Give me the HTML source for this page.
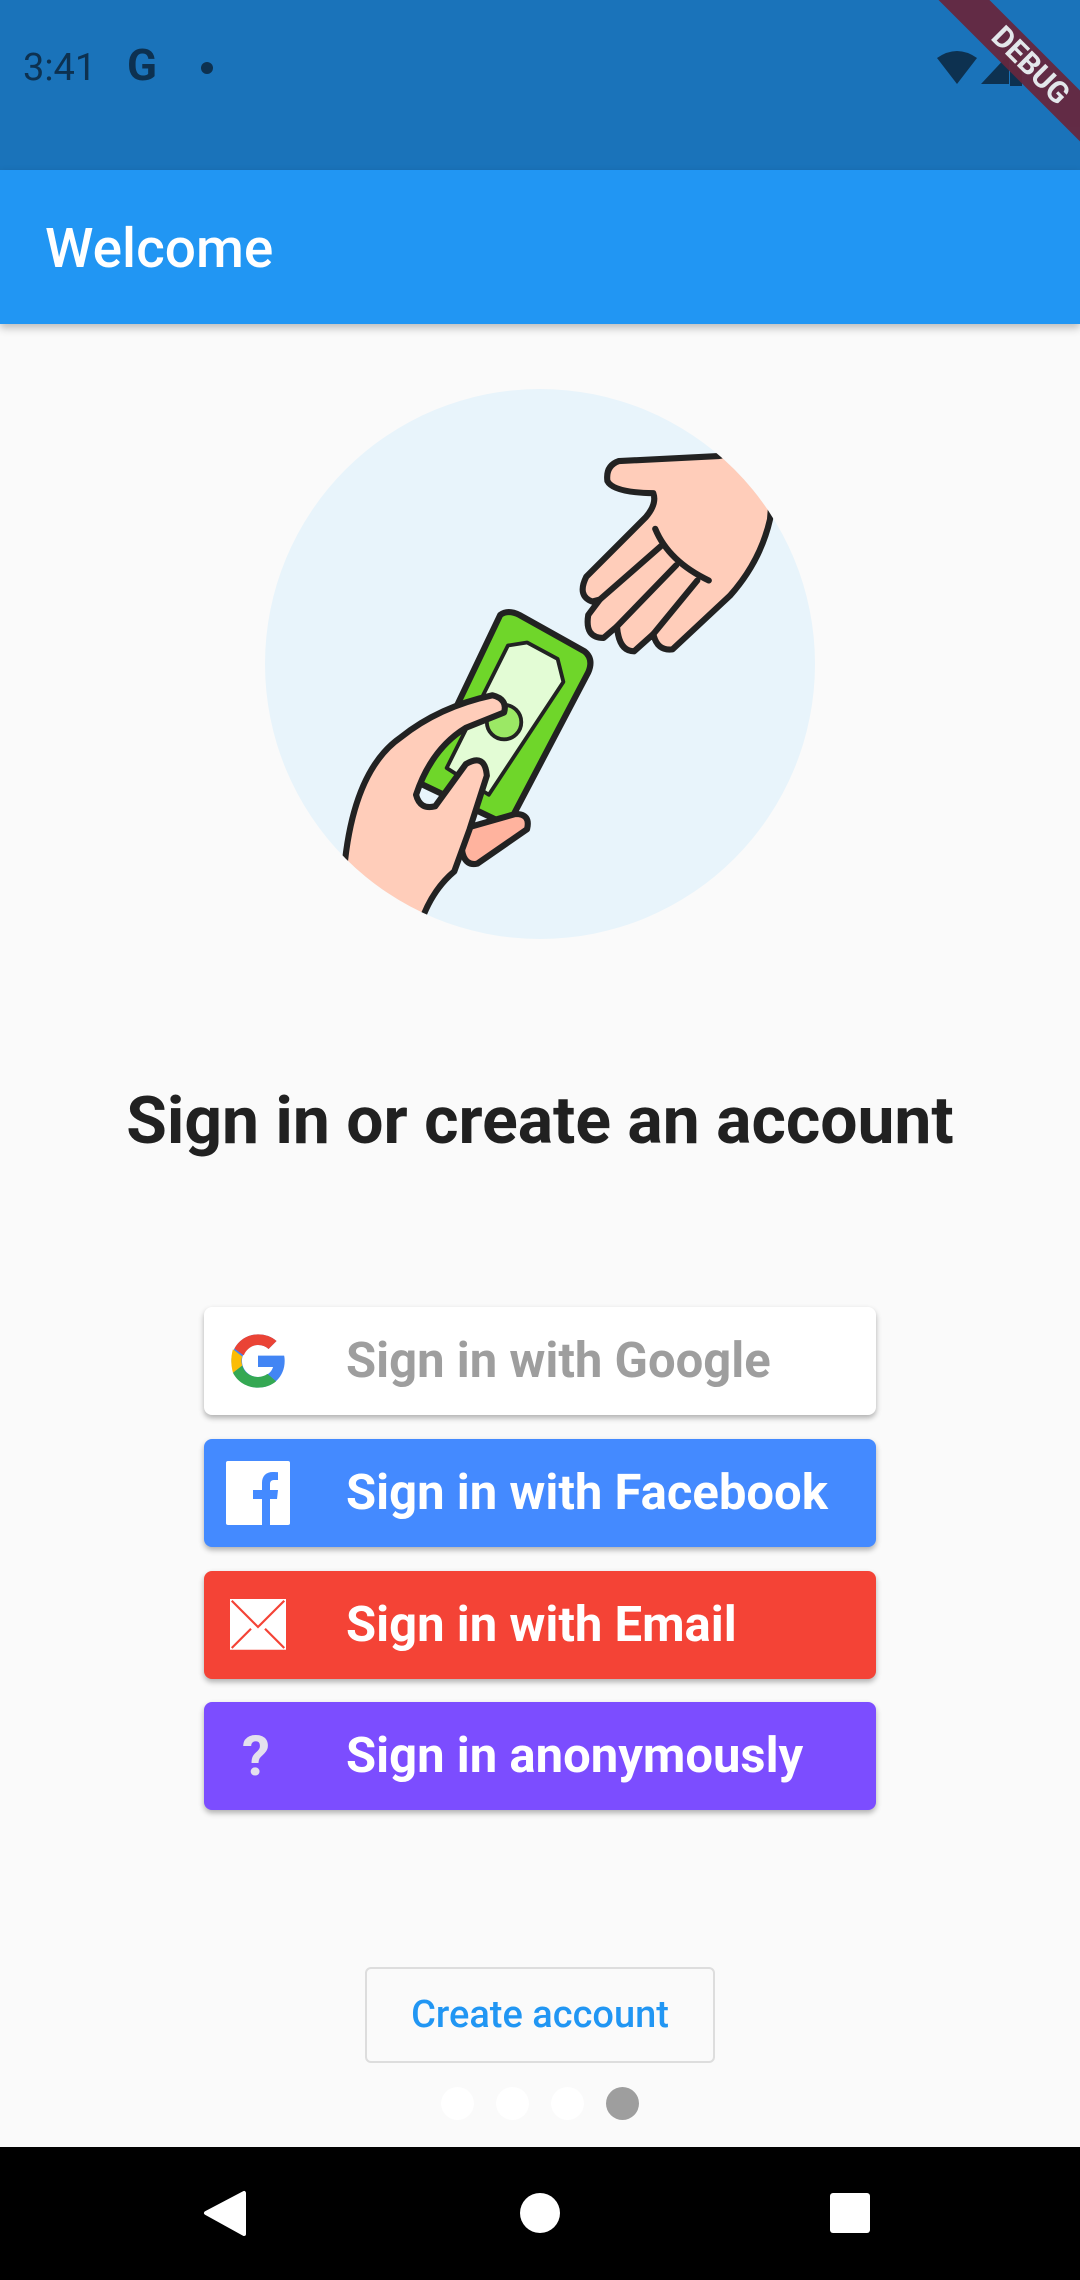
<!DOCTYPE html>
<html><head><meta charset="utf-8"><style>
html,body{margin:0;padding:0}
body{width:1080px;height:2280px;position:relative;overflow:hidden;background:#FAFAFA;font-family:"Roboto","Liberation Sans",sans-serif}
.abs{position:absolute}
.status{left:0;top:0;width:1080px;height:170px;background:#1A73BA}
.appbar{left:0;top:170px;width:1080px;height:154px;background:#2196F3;box-shadow:0 4px 8px rgba(0,0,0,.25)}
.btn{position:absolute;left:204px;width:672px;height:108px;border-radius:8px;box-shadow:0 3px 6px rgba(0,0,0,.3);font-weight:bold;font-size:49px;color:#fff}
.btn span{position:absolute;left:142px;top:0;line-height:108px;white-space:nowrap}
.ico{position:absolute;left:22px;top:22px;width:64px;height:64px}
.dot{position:absolute;top:2087px;width:33px;height:33px;border-radius:50%;background:#fff}
</style></head><body>
<div class="abs status"></div>
<div class="abs" style="left:23px;top:43px;font-size:38px;color:#0D3150;line-height:50px">3:41</div>
<div class="abs" style="left:127px;top:40px;font-size:44px;font-weight:bold;color:#0D3150;line-height:50px">G</div>
<div class="abs" style="left:201px;top:62px;width:12px;height:12px;border-radius:50%;background:#0D3150"></div>
<svg class="abs" style="left:935px;top:50px" width="90" height="40" viewBox="0 0 90 40">
<path d="M2 8 Q22 -6 42 8 L22 34 Z" fill="#0D3150"/>
<path d="M46 34 L74 4 L74 34 Z" fill="#0D3150"/>
<rect x="75" y="4" width="12" height="32" fill="#0D3150"/>
</svg>
<div class="abs" style="left:880px;top:48px;width:300px;height:36px;background:#66283F;transform:rotate(45deg);transform-origin:center;color:#eee;font-weight:bold;font-size:30px;line-height:36px;text-align:center;opacity:.95">DEBUG</div>
<div class="abs appbar"></div>
<div class="abs" style="left:45px;top:217px;font-size:55px;color:#fff;line-height:64px;font-weight:500">Welcome</div>

<svg class="abs" style="left:0;top:0" width="1080" height="1000" viewBox="0 0 1080 1000">
<defs><clipPath id="c"><circle cx="540" cy="664" r="275"/></clipPath></defs>
<circle cx="540" cy="664" r="275" fill="#E8F4FB"/>
<g clip-path="url(#c)">
<g transform="translate(240,370) scale(0.3827)" stroke="#222" stroke-width="16" stroke-linejoin="round" stroke-linecap="round">
<path d="M1250,225 L990,238 Q955,250 960,290 Q975,320 1080,322 Q1090,350 1060,385 L905,540 Q880,590 920,605 L940,600 L910,640 Q900,700 950,700 L985,670 Q990,735 1030,735 L1080,690 Q1090,735 1130,730 L1280,590 Q1360,500 1385,390 L1400,200 Z" fill="#FFCDBA"/>
<path d="M1085,415 Q1120,500 1225,550 M1100,460 L940,600 M1140,510 L985,670 M1195,550 L1080,690" fill="none"/>
<path d="M680,640 Q700,625 730,640 L900,735 Q925,755 910,790 L700,1190 L470,1080 Z" fill="#6FD62A"/>
<path d="M700,720 L750,712 L830,755 L845,815 L650,1110 L540,1040 Z" fill="#E3FCD5" stroke-width="10"/>
<circle cx="690" cy="920" r="45" fill="#9BE865" stroke-width="10"/>
<path d="M580,1200 Q570,1300 620,1290 L750,1200 Q760,1160 720,1160 Z" fill="#FFB39E"/>
<path d="M260,1520 L270,1330 Q290,1050 420,960 Q520,880 660,850 Q700,860 690,895 L590,935 Q500,990 460,1110 Q470,1150 510,1140 L590,1030 Q640,1000 645,1060 L600,1200 L560,1310 Q500,1360 470,1450 L380,1420 L250,1560 Z" fill="#FFCDBA"/>
</g></g>
</svg>

<div class="abs" style="left:0;width:1080px;top:1082px;text-align:center;font-size:66px;font-weight:bold;color:#212121;line-height:80px">Sign in or create an account</div>

<div class="btn" style="top:1307px;background:#fff;color:#9E9E9E">
<svg class="ico" viewBox="0 0 48 48"><path d="M43.6 20H24v8.5h11.3C34 33 29.7 36 24 36c-6.6 0-12-5.4-12-12s5.4-12 12-12c3 0 5.8 1.1 7.9 3l6-6C34.3 5.7 29.4 4 24 4 13 4 4 13 4 24s9 20 20 20c11 0 20-8 20-20 0-1.3-.1-2.7-.4-4z" fill="#4285F4"/><path d="M6.3 14.7l7 5.1C15.1 15.3 19.2 12 24 12c3 0 5.8 1.1 7.9 3l6-6C34.3 5.7 29.4 4 24 4 16.3 4 9.7 8.3 6.3 14.7z" fill="#EA4335"/><path d="M24 44c5.2 0 9.9-1.7 13.6-4.8l-6.5-5.5C29 35.2 26.6 36 24 36c-5.7 0-10.5-3.5-11.8-8.6l-7 5.4C8.5 39.5 15.7 44 24 44z" fill="#34A853"/><path d="M12.2 27.4C11.8 26.3 11.6 25.2 11.6 24s.2-2.3.6-3.4l-7-5.4C4.4 17.9 4 20.9 4 24s.5 6.1 1.2 8.8z" fill="#FBBC05"/></svg>
<span>Sign in with Google</span></div>
<div class="btn" style="top:1439px;background:#448AFF">
<svg class="ico" viewBox="0 0 64 64"><rect x="0" y="0" width="64" height="64" rx="2" fill="#fff"/><path d="M36 64V38h-9v-9h9v-7c0-7 4-11 11-11 3 0 5 .2 5 .2V19h-4c-3 0-4 2-4 4v6h8l-1 9h-7v26z" fill="#448AFF"/></svg>
<span>Sign in with Facebook</span></div>
<div class="btn" style="top:1571px;background:#F44336">
<svg class="ico" viewBox="0 0 64 64" style="top:28px;height:56px"><rect x="0" y="0" width="64" height="58" fill="#fff"/><path d="M2 2 L32 32 L62 2 M2 56 L24 34 M62 56 L40 34" fill="none" stroke="#F44336" stroke-width="2.5"/></svg>
<span>Sign in with Email</span></div>
<div class="btn" style="top:1702px;background:#7C4DFF">
<div style="position:absolute;left:38px;top:0;line-height:108px;font-size:56px;color:#E4E0EE">?</div>
<span>Sign in anonymously</span></div>

<div class="abs" style="left:365px;top:1967px;width:346px;height:92px;border:2px solid #DDDDDD;border-radius:6px;color:#2196F3;font-size:38px;line-height:92px;text-align:center;font-weight:500">Create account</div>
<div class="dot" style="left:441px"></div>
<div class="dot" style="left:496px"></div>
<div class="dot" style="left:551px"></div>
<div class="dot" style="left:606px;background:#9E9E9E"></div>

<div class="abs" style="left:0;top:2147px;width:1080px;height:133px;background:#000"></div>
<svg class="abs" style="left:0;top:2147px" width="1080" height="133">
<path d="M244 46 L244 87 L206 66 Z" fill="#fff" stroke="#fff" stroke-width="4" stroke-linejoin="round"/>
<circle cx="540" cy="66" r="20" fill="#fff"/>
<rect x="830" y="46" width="40" height="40" rx="3" fill="#fff"/>
</svg>
</body></html>
